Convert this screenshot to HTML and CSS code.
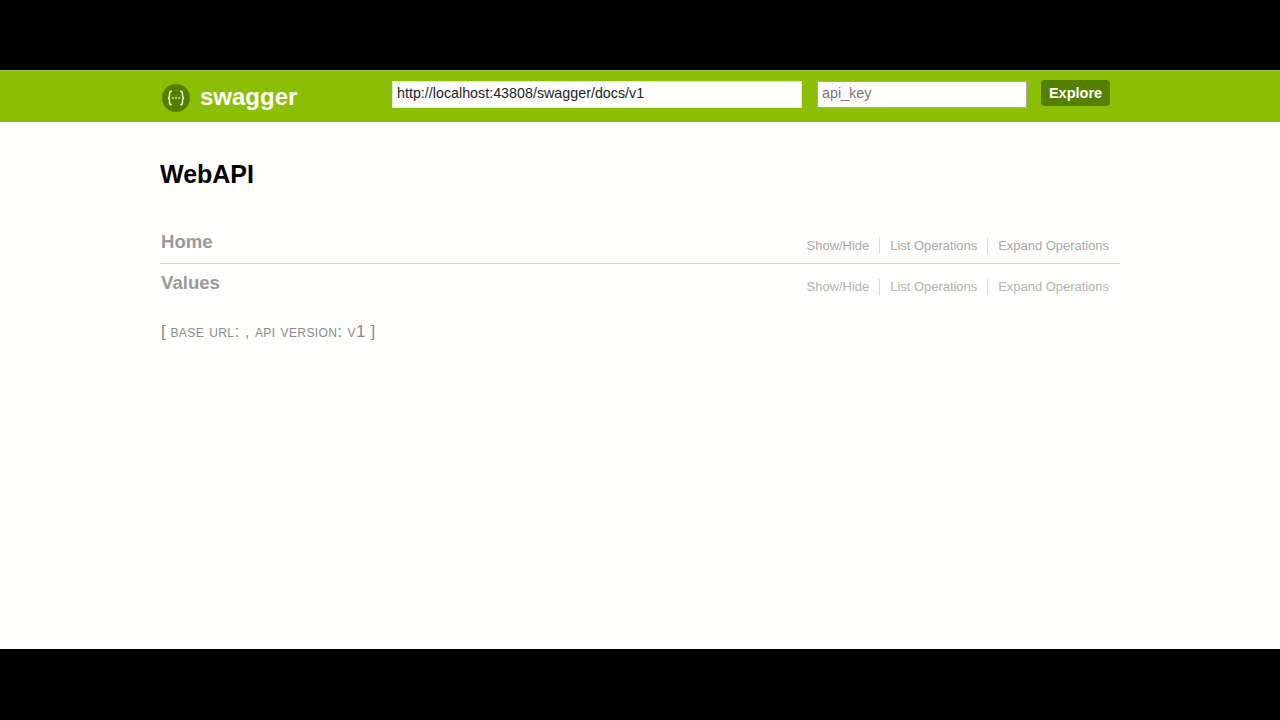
FILE: index.html
```html
<!DOCTYPE html>
<html lang="en">
<head>
<meta charset="utf-8">
<title>Swagger UI</title>
<link rel="stylesheet" href="styles.css">
</head>
<body>
<div class="letterbox-top"></div>
<div class="screen">
  <header class="header">
    <div class="header-inner">
      <a class="logo">
        <svg class="logo-icon" width="28" height="28" viewBox="0 0 28 28">
          <circle cx="14" cy="14" r="14" fill="#547f00"/>
          <path d="M9.800 7.200c-1.900 0-2.300 1-2.300 2.600v2c0 1.200-.5 2-1.500 2.200 1 .2 1.500 1 1.500 2.200v2c0 1.600.4 2.600 2.300 2.600M18.200 7.200c1.900 0 2.300 1 2.300 2.600v2c0 1.200.5 2 1.500 2.200-1 .2-1.500 1-1.500 2.200v2c0 1.600-.4 2.600-2.300 2.600" fill="none" stroke="#f4f8ea" stroke-width="1.500"/>
          <path d="M10 14h1.600M13.200 14h1.600M16.400 14h1.600" stroke="#f4f8ea" stroke-width="1.600"/>
        </svg>
        <span class="logo-text">swagger</span>
      </a>
      <form class="api-form">
        <input class="field field-url" type="text" value="http://localhost:43808/swagger/docs/v1">
        <input class="field field-key" type="text" placeholder="api_key">
        <a class="explore">Explore</a>
      </form>
    </div>
  </header>
  <main class="content">
    <h1 class="title">WebAPI</h1>
    <ul class="resources">
      <li class="resource resource-first">
        <h2 class="resource-name">Home</h2>
        <ul class="ops">
          <li class="op">Show/Hide</li>
          <li class="op">List Operations</li>
          <li class="op">Expand Operations</li>
        </ul>
      </li>
      <li class="resource resource-second">
        <h2 class="resource-name">Values</h2>
        <ul class="ops">
          <li class="op">Show/Hide</li>
          <li class="op">List Operations</li>
          <li class="op">Expand Operations</li>
        </ul>
      </li>
    </ul>
    <p class="footer-info">[ <span class="small-caps">base url: , api version: v1</span> ]</p>
  </main>
</div>
<div class="letterbox-bottom"></div>
</body>
</html>
```
FILE: styles.css
```css
* { box-sizing: border-box; }
html, body { margin: 0; padding: 0; height: 100%; }
body {
  display: flex;
  flex-direction: column;
  height: 720px;
  overflow: hidden;
  background: #000;
  font-family: "Liberation Sans", Arial, sans-serif;
}
.letterbox-top { height: 70px; background: #000; }
.letterbox-bottom { height: 71px; background: #000; }
.screen { flex: 1; background: #fffffd; }
.header {
  height: 52px;
  background: #8bbf04;
  border-top: 1px solid #a3c65a;
}
.header-inner {
  width: 960px;
  margin: 0 auto;
  display: flex;
  align-items: flex-start;
}
.logo {
  display: flex;
  align-items: flex-start;
  gap: 10px;
  width: 232px;
  padding: 12px 0 0 2px;
}
.logo-icon { flex: none; margin-top: 1px; }
.logo-text {
  font-size: 24px;
  font-weight: bold;
  color: #fff;
  line-height: 28px;
}
.api-form {
  display: flex;
  align-items: flex-start;
  padding-top: 9px;
}
.field {
  height: 27px;
  padding: 0 4px 3px;
  margin: 1px 0 0;
  background: #fff;
  border: 1px solid #b4b4b4;
  border-radius: 0;
  font-family: "Liberation Sans", Arial, sans-serif;
  font-size: 14.300px;
  color: #222;
  outline: none;
}
.field::placeholder { color: #777; opacity: 1; }
.field-url { width: 410px; margin-right: 15px; border-color: #e3e8d0; }
.field-key { width: 210px; margin-right: 14px; border-color: #a9a9a9; }
.explore {
  display: block;
  width: 69px;
  height: 26px;
  background: #547f00;
  border-radius: 4px;
  color: #fff;
  font-size: 14.500px;
  font-weight: bold;
  line-height: 26px;
  text-align: center;
}
.content {
  width: 960px;
  margin: 0 auto;
}
.title {
  margin: 0;
  padding-top: 38px;
  font-size: 25px;
  line-height: 28px;
  font-weight: bold;
  color: #000;
}
.resources { list-style: none; margin: 0; padding: 43px 0 0; }
.resource {
  display: flex;
  justify-content: space-between;
  align-items: flex-start;
}
.resource-first { height: 33px; border-bottom: 1px solid #d5d5d8; }
.resource-second { padding-top: 8px; }
.resource-name {
  margin: 0;
  padding-left: 1px;
  font-size: 18.600px;
  line-height: 21px;
  font-weight: bold;
  color: #999999;
}
.ops {
  list-style: none;
  margin: 0;
  padding: 7px 11px 0 0;
  display: flex;
}
.op {
  font-size: 13px;
  letter-spacing: -0.030px;
  line-height: 16px;
  color: #a8a8a8;
  padding: 0 10px;
  border-right: 1px solid #d8d8d8;
}
.op:last-child { border-right: 0; padding-right: 0; }
.resource-second .op { color: #b2b2b2; }
.footer-info {
  margin: 0;
  padding: 28px 0 0 1px;
  font-size: 17px;
  line-height: 18px;
  color: #8a8a8a;
}
.small-caps { font-variant: small-caps; letter-spacing: 0.400px; }
```
